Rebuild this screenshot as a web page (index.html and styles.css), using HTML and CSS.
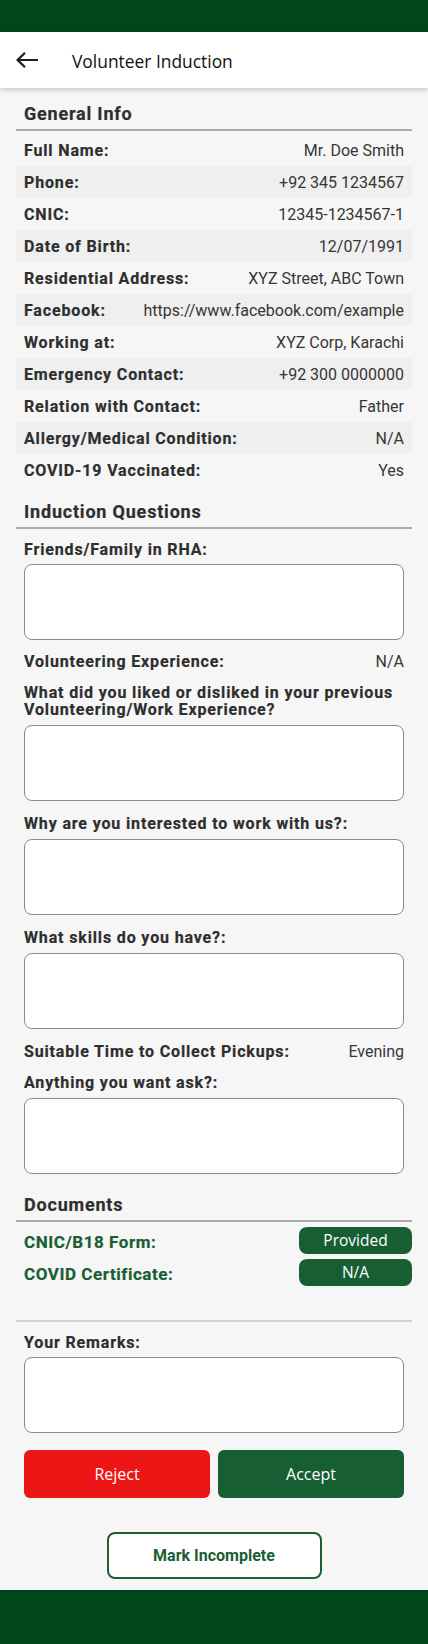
FILE: index.html
```html
<!DOCTYPE html>
<html lang="en">
<head>
<meta charset="utf-8">
<title>Volunteer Induction</title>
<link rel="stylesheet" href="styles.css">
</head>
<body>
<div class="statusbar"></div>
<header class="appbar">
  <svg class="back" width="24" height="24" viewBox="0 0 24 24" aria-hidden="true">
    <path d="M2.6 12H23M10 4.7L2.6 12L10 19.3" fill="none" stroke="#1c1c1c" stroke-width="2.2"/>
  </svg>
  <h1 class="title">Volunteer Induction</h1>
</header>

<main class="content">
  <h2 class="section-title">General Info</h2>
  <div class="info-list">
    <div class="info-row"><span class="lbl">Full Name:</span><span class="val">Mr. Doe Smith</span></div>
    <div class="info-row"><span class="lbl">Phone:</span><span class="val">+92 345 1234567</span></div>
    <div class="info-row"><span class="lbl">CNIC:</span><span class="val">12345-1234567-1</span></div>
    <div class="info-row"><span class="lbl">Date of Birth:</span><span class="val">12/07/1991</span></div>
    <div class="info-row"><span class="lbl">Residential Address:</span><span class="val">XYZ Street, ABC Town</span></div>
    <div class="info-row"><span class="lbl">Facebook:</span><span class="val">https://www.facebook.com/example</span></div>
    <div class="info-row"><span class="lbl">Working at:</span><span class="val">XYZ Corp, Karachi</span></div>
    <div class="info-row"><span class="lbl">Emergency Contact:</span><span class="val">+92 300 0000000</span></div>
    <div class="info-row"><span class="lbl">Relation with Contact:</span><span class="val">Father</span></div>
    <div class="info-row"><span class="lbl">Allergy/Medical Condition:</span><span class="val">N/A</span></div>
    <div class="info-row"><span class="lbl">COVID-19 Vaccinated:</span><span class="val">Yes</span></div>
  </div>

  <h2 class="section-title">Induction Questions</h2>
  <div class="questions">
    <div class="field first">
      <label class="flabel">Friends/Family in RHA:</label>
      <textarea class="ta"></textarea>
    </div>
    <div class="qrow after-first"><span class="lbl">Volunteering Experience:</span><span class="val">N/A</span></div>
    <div class="field after-row">
      <label class="flabel">What did you liked or disliked in your previous Volunteering/Work Experience?</label>
      <textarea class="ta"></textarea>
    </div>
    <div class="field after-ta">
      <label class="flabel">Why are you interested to work with us?:</label>
      <textarea class="ta"></textarea>
    </div>
    <div class="field after-ta">
      <label class="flabel">What skills do you have?:</label>
      <textarea class="ta"></textarea>
    </div>
    <div class="qrow after-ta"><span class="lbl">Suitable Time to Collect Pickups:</span><span class="val">Evening</span></div>
    <div class="field after-row">
      <label class="flabel">Anything you want ask?:</label>
      <textarea class="ta"></textarea>
    </div>
  </div>

  <h2 class="section-title docs-title">Documents</h2>
  <div class="docs">
    <div class="doc-row"><span class="doc-lbl">CNIC/B18 Form:</span><span class="pill">Provided</span></div>
    <div class="doc-row"><span class="doc-lbl">COVID Certificate:</span><span class="pill">N/A</span></div>
  </div>

  <div class="remarks">
    <label class="flabel">Your Remarks:</label>
    <textarea class="ta"></textarea>
    <div class="actions">
      <button class="btn reject">Reject</button>
      <button class="btn accept">Accept</button>
    </div>
    <div class="incomplete-wrap">
      <button class="btn-outline">Mark Incomplete</button>
    </div>
  </div>
</main>
<div class="navbar"></div>
</body>
</html>
```

FILE: styles.css
```css
* { box-sizing: border-box; }

html, body {
  margin: 0;
  padding: 0;
}

body {
  width: 428px;
  background: #f6f6f6;
  font-family: Roboto, "Liberation Sans", sans-serif;
  color: #2e2e2e;
}

.statusbar {
  height: 32px;
  background: #00461b;
}

.appbar {
  position: relative;
  z-index: 2;
  height: 56px;
  background: #ffffff;
  display: flex;
  align-items: center;
  box-shadow: 0 2px 5px rgba(0, 0, 0, 0.18);
}

.back {
  display: block;
  margin-left: 15px;
  margin-right: 33px;
}

.title {
  margin: 0;
  font-family: "Open Sans", "Noto Sans", sans-serif;
  font-weight: 400;
  font-size: 17.4px;
  color: #111;
  padding-top: 2px;
}

.content {
  padding: 0 16px;
}

.section-title {
  margin: 0;
  padding: 14px 8px 3px;
  font-size: 18px;
  line-height: 24px;
  font-weight: 700;
  letter-spacing: 0.8px;
  color: #2e2e2e;
  border-bottom: 2px solid #ababab;
  -webkit-text-stroke: 0.2px #2e2e2e;
}

.info-list {
  margin-top: 3px;
}

.info-row {
  display: flex;
  justify-content: space-between;
  align-items: baseline;
  height: 32px;
  line-height: 32px;
  padding: 1px 8px 0;
}

.info-row:nth-child(even) {
  background: #efefef;
}

.lbl {
  font-size: 16px;
  font-weight: 700;
  letter-spacing: 0.85px;
  color: #2e2e2e;
  white-space: nowrap;
  -webkit-text-stroke: 0.2px #2e2e2e;
}

.val {
  font-size: 16px;
  font-weight: 400;
  color: #363636;
  white-space: nowrap;
}

.questions {
  padding: 0 8px;
}

.field.first { margin-top: 12px; }
.after-first { margin-top: 13px; }
.after-ta { margin-top: 14px; }
.after-row { margin-top: 14px; }

.flabel {
  display: block;
  font-size: 16px;
  line-height: 17px;
  font-weight: 700;
  letter-spacing: 0.85px;
  color: #2e2e2e;
  -webkit-text-stroke: 0.2px #2e2e2e;
}

.ta {
  display: block;
  width: 100%;
  height: 76px;
  margin: 7px 0 0;
  background: #fff;
  border: 1px solid #8a8a8a;
  border-radius: 8px;
  resize: none;
  font: inherit;
}

.field.first .ta { margin-top: 6px; }

.qrow {
  display: flex;
  justify-content: space-between;
  align-items: baseline;
  line-height: 17px;
}

.docs-title {
  margin-top: 5px;
}

.docs {
  padding-top: 5px;
  display: flex;
  flex-direction: column;
  gap: 5px;
}

.doc-row {
  display: flex;
  justify-content: space-between;
  height: 27px;
  padding-left: 8px;
}

.doc-lbl {
  font-size: 17px;
  font-weight: 700;
  letter-spacing: 0.55px;
  color: #1a5e32;
  line-height: 31px;
  -webkit-text-stroke: 0.2px #1a5e32;
}

.pill {
  width: 113px;
  height: 27px;
  border-radius: 8px;
  background: #185e33;
  color: #fff;
  font-family: "Open Sans", "Noto Sans", sans-serif;
  font-size: 15.5px;
  line-height: 27px;
  text-align: center;
}

.remarks {
  margin-top: 34px;
  border-top: 2px solid #d2d2d2;
  padding: 12px 8px 0;
}

.remarks .ta {
  margin-top: 6px;
}

.actions {
  display: flex;
  gap: 8px;
  margin-top: 17px;
}

.btn {
  flex: 1;
  height: 48px;
  border: 0;
  border-radius: 6px;
  color: #fff;
  font-family: "Open Sans", "Noto Sans", sans-serif;
  font-size: 16px;
}

.reject { background: #ec1616; }
.accept { background: #185e33; }

.incomplete-wrap {
  display: flex;
  justify-content: center;
  margin-top: 34px;
  padding-bottom: 11px;
}

.btn-outline {
  width: 215px;
  height: 47px;
  background: #fff;
  border: 2px solid #1a5e32;
  border-radius: 8px;
  color: #1a5e32;
  font-family: Roboto, sans-serif;
  font-weight: 700;
  font-size: 16px;
}

.navbar {
  height: 54px;
  background: #00461b;
}
```
